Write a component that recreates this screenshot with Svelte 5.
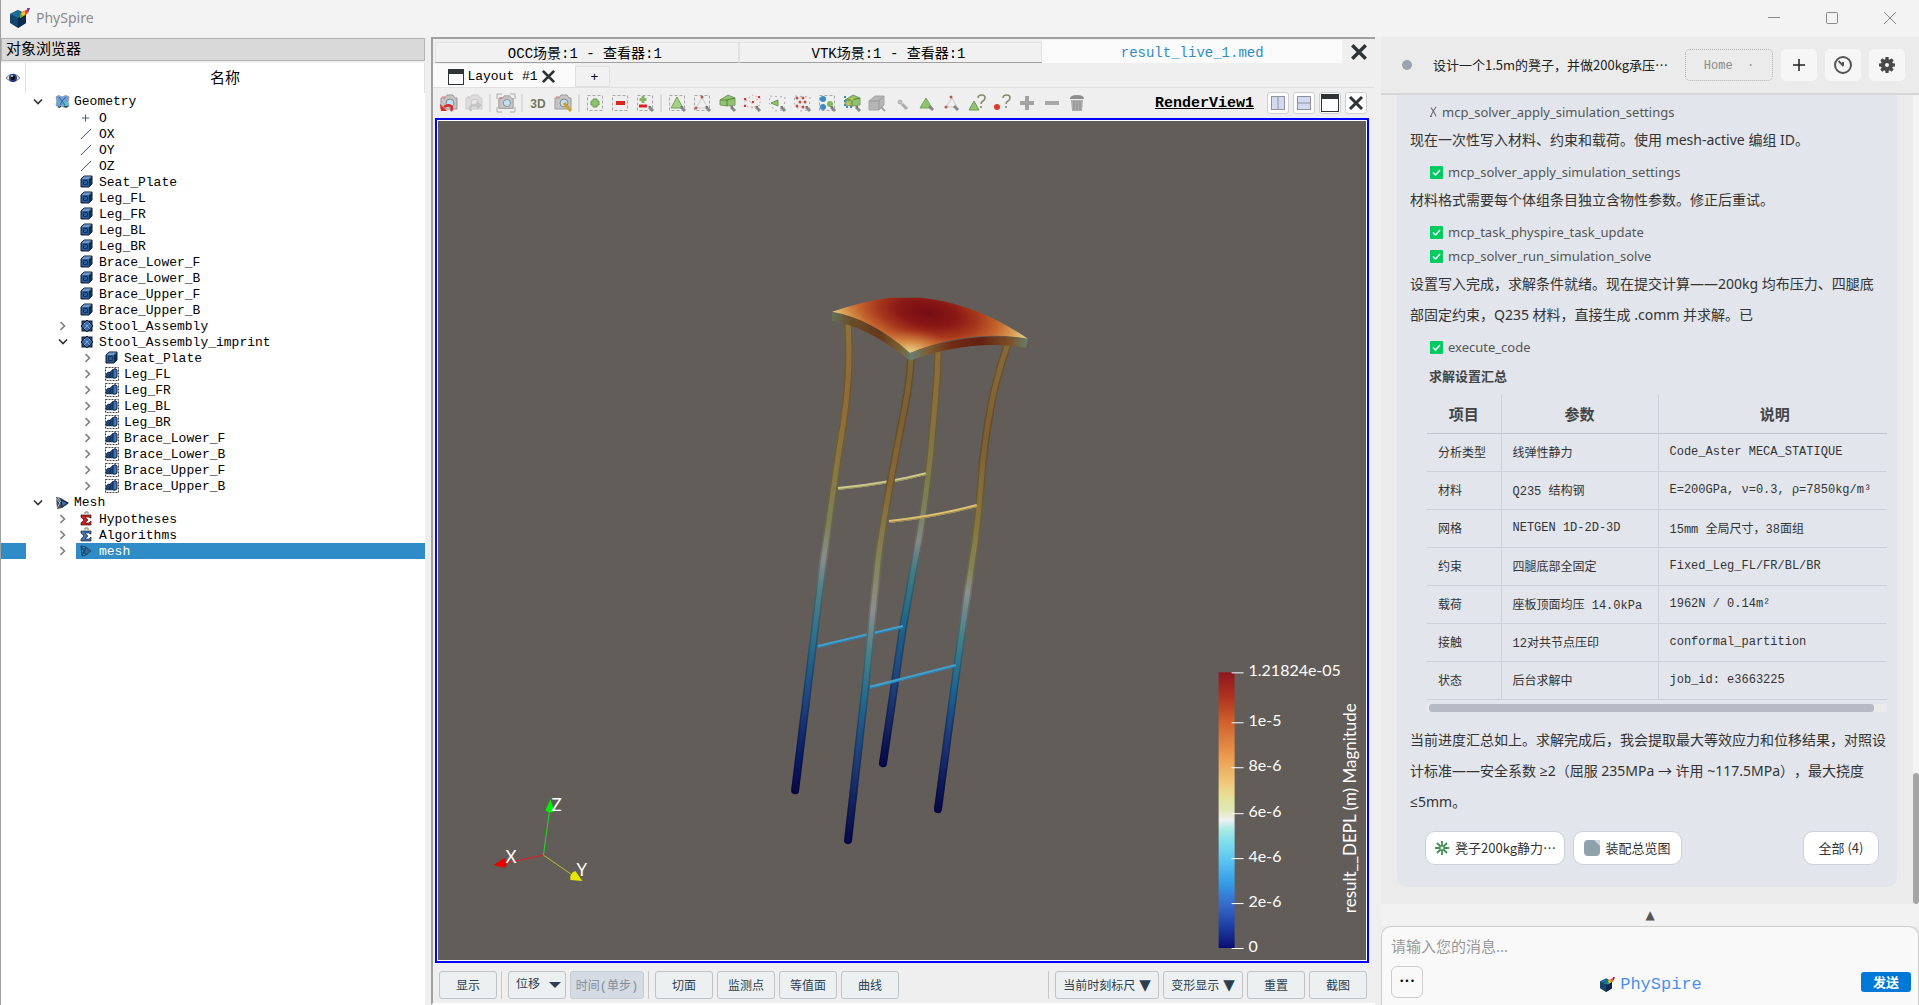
<script lang="ts">
    type TreeRow = { label: string; depth: number; icon: string; arrow?: "open" | "closed"; selected?: boolean };

    const parts = ["Leg_FL", "Leg_FR", "Leg_BL", "Leg_BR", "Brace_Lower_F", "Brace_Lower_B", "Brace_Upper_F", "Brace_Upper_B"];

    const tree: TreeRow[] = [
        { label: "Geometry", depth: 0, icon: "geometry", arrow: "open" },
        { label: "O", depth: 1, icon: "point" },
        { label: "OX", depth: 1, icon: "line" },
        { label: "OY", depth: 1, icon: "line" },
        { label: "OZ", depth: 1, icon: "line" },
        { label: "Seat_Plate", depth: 1, icon: "solid" },
        ...parts.map((label) => ({ label, depth: 1, icon: "solid" })),
        { label: "Stool_Assembly", depth: 1, icon: "compound", arrow: "closed" },
        { label: "Stool_Assembly_imprint", depth: 1, icon: "compound", arrow: "open" },
        { label: "Seat_Plate", depth: 2, icon: "solid", arrow: "closed" },
        ...parts.map((label) => ({ label, depth: 2, icon: "group", arrow: "closed" as const })),
        { label: "Mesh", depth: 0, icon: "mesh-root", arrow: "open" },
        { label: "Hypotheses", depth: 1, icon: "sigma-red", arrow: "closed" },
        { label: "Algorithms", depth: 1, icon: "sigma-blue", arrow: "closed" },
        { label: "mesh", depth: 1, icon: "mesh", arrow: "closed", selected: true },
    ];

    const tabs = ["OCC场景:1 - 查看器:1", "VTK场景:1 - 查看器:1", "result_live_1.med"];

    const tools = [
        "undo", "redo", "|", "snapshot", "|", "3d", "zoom", "|", "add", "sub", "toggle", "|",
        "cells", "points", "frustum-cells", "frustum-points", "poly-cells", "poly-points", "blocks", "inter-cells",
        "cube", "hover-point", "hover-cell", "hover-tri", "query-cell", "query-point", "plus", "minus", "trash",
    ];

    const ticks = [
        { y: 672, text: "1.21824e-05" },
        { y: 722, text: "1e-5" },
        { y: 767, text: "8e-6" },
        { y: 813, text: "6e-6" },
        { y: 858, text: "4e-6" },
        { y: 903, text: "2e-6" },
        { y: 948, text: "0" },
    ];

    const legs = [
        { id: "c", y1: 352, y2: 764, d: "M938 350C938 375 936 395 932 437C930 465 923 520 915 560L903 627L883 763",
          stops: [[0, "#8c6c3a"], [16, "#86713f"], [30, "#7e7b4c"], [38, "#7d805f"], [46, "#868686"], [53, "#437c82"], [65, "#23668a"], [82, "#1f3d78"], [100, "#080848"]] },
        { id: "a", y1: 325, y2: 791, d: "M848 322C850 360 849 390 840 443C835 475 829 520 823 562L795 790",
          stops: [[0, "#8a7340"], [14, "#8f6a38"], [29, "#8a7640"], [42, "#7c8057"], [50, "#8a8b8b"], [57, "#4f8085"], [69, "#2a6a8c"], [80, "#1f4680"], [93, "#0c1a60"], [100, "#080848"]] },
        { id: "b", y1: 359, y2: 841, d: "M911 356C910 385 905 405 895 457C888 495 879 545 877 570L865 690L848 840",
          stops: [[0, "#7a6438"], [13, "#7e6034"], [27, "#846a38"], [42, "#84845a"], [52, "#8d8d8d"], [60, "#4e8388"], [71, "#24688c"], [83, "#203d78"], [100, "#080848"]] },
        { id: "d", y1: 346, y2: 810, d: "M1008 343C995 380 989 410 983 460C980 500 975 545 972 562L958 660L938 809",
          stops: [[0, "#86683a"], [20, "#7e6034"], [37, "#86743f"], [48, "#848457"], [53, "#8d8d8d"], [63, "#44808a"], [74, "#1d6490"], [83, "#203d7a"], [100, "#080848"]] },
    ];

    const settings = [
        ["分析类型", "线弹性静力", "Code_Aster MECA_STATIQUE"],
        ["材料", "Q235 结构钢", "E=200GPa, ν=0.3, ρ=7850kg/m³"],
        ["网格", "NETGEN 1D-2D-3D", "15mm 全局尺寸，38面组"],
        ["约束", "四腿底部全固定", "Fixed_Leg_FL/FR/BL/BR"],
        ["载荷", "座板顶面均压 14.0kPa", "1962N / 0.14m²"],
        ["接触", "12对共节点压印", "conformal_partition"],
        ["状态", "后台求解中", "job_id: e3663225"],
    ];
</script>

{#snippet logo(size: number)}
    <svg class="logo" width={size} height={size} viewBox="0 0 20 20">
        <path d="M0 6L8 2L16 6V15L8 20L0 15Z" fill="#12466e" />
        <path d="M0 6L8 2L16 6L8 10Z" fill="#1e6d96" />
        <path d="M8 10L16 6V15L8 20Z" fill="#0d2a4e" />
        <path d="M10 10L12 4L20 0L17 6Z" fill="#e8452c" />
        <path d="M10 10L11 5L15 3L15 7Z" fill="#f6c21c" />
        <path d="M10 10L11 6L13 8Z" fill="#35b54a" />
        <path d="M17 0H20L18 5Z" fill="#7d2bb0" />
    </svg>
{/snippet}

{#snippet magnifier()}
    <path d="M14 14L18 18" stroke="#8a8a8a" stroke-width="3" />
    <path d="M13 13h3v3z" fill="#777" />
{/snippet}

{#snippet dashBox()}
    <rect x="2.5" y="2.5" width="15" height="15" fill="none" stroke="#a8a8a8" stroke-dasharray="3 2" />
{/snippet}

{#snippet camera(faded: boolean)}
    <g opacity={faded ? 0.4 : 1}>
        <path d="M2 5h4l2-3h6l2 3h2v11H2z" fill="#c4c4c4" stroke="#999" />
        <circle cx="11" cy="10" r="4" fill={faded ? "#ddd" : "#bfe0f4"} stroke="#888" />
        <path d="M3 4h3" stroke="#e66" stroke-width="1" />
    </g>
{/snippet}

{#snippet treeIcon(name: string)}
    <svg width="16" height="16" viewBox="0 0 16 16">
        {#if name === "geometry"}
            <path d="M1 3q2-3 6 0q4-3 7 0l-1 5l1 4q-3 3-6 1l-1-2l-1 2q-4 1-5-2l1-4z" fill="#6f9fd8" stroke="#8c9cae" />
            <path d="M2 8l3 4l1-4zM9 8l4 0l0 4l-3 1z" fill="#4fc6c8" />
            <path d="M4 3l3 4l4-4M7 7l-2 4M7 7l3 4" stroke="#3d5f94" fill="none" />
            <path d="M3 13q2 1 3-1M9 12q2 2 4 0" stroke="#1c2c3c" fill="none" />
        {:else if name === "point"}
            <path d="M2 8h7M5.500 4.500v7" stroke="#3d5f8c" />
        {:else if name === "line"}
            <path d="M1 13L11 3" stroke="#3d5f8c" />
        {:else if name === "solid"}
            <path d="M1 5L4 2H12V10L9 13H1Z" fill="#2b5b95" stroke="#101c2c" />
            <path d="M1.500 5L4 2.500H11.500L9 5Z" fill="#7299c6" />
            <path d="M9 5V13L12 10V2.500Z" fill="#142c4a" />
            <path d="M3.500 6.500h4v4h-4z" fill="none" stroke="#17365e" />
        {:else if name === "compound"}
            <rect x="2" y="3" width="10" height="10" fill="#1f4676" stroke="#101c2c" />
            <path d="M7 2L13 8L7 14L1 8Z" fill="#3a6aa5" stroke="#101c2c" />
            <path d="M4 5L10 11M10 5L4 11" stroke="#a9c0da" stroke-dasharray="2 1" />
        {:else if name === "group"}
            <rect x="0.500" y="1.500" width="13" height="13" fill="#fff" stroke="#444" stroke-dasharray="2 1" />
            <path d="M1 12V8L3 6H5V12ZM5 6L8 3V12H5Z" fill="#1c4474" stroke="#142c4a" stroke-width="0.500" />
            <path d="M8 4Q10 1 12 4V11Q10 13 8 12Z" fill="#3f73b5" stroke="#142c4a" />
        {:else if name === "mesh-root"}
            <path d="M1 2L6 3L14 8L7 13L2 14Z" fill="#444f5c" />
            <path d="M6 5L13 8L7 12Z" fill="#3c6fb4" stroke="#141d28" />
            <path d="M1 3L5 8L2 13M3 3L6 7" stroke="#bac0c8" fill="none" />
        {:else if name === "mesh"}
            <path d="M1 3L6 4L11 8L6 12L2 13ZM1 3L4 8L2 13M6 4L4 8L6 12M4 8H11M1 6L8 6M2 10H8" fill="none" stroke="#1f4468" />
        {:else}
            <path d="M1 4H11V7H10L9 6H5L8 9L5 12H9L11 10V14H1V12L4 9L1 6Z" fill={name === "sigma-red" ? "#d21c1c" : "#3f73b5"} stroke="#222" stroke-width="0.700" />
            <path d="M5 3V1h3v2" fill="none" stroke="#777" />
        {/if}
    </svg>
{/snippet}

{#snippet toolIcon(name: string)}
    <svg width="20" height="20" viewBox="0 0 20 20">
        {#if name === "undo"}
            {@render camera(false)}
            <path d="M5 14q4-3 7-1q2 2 0 5" fill="none" stroke="#d92b2b" stroke-width="2.500" />
            <path d="M1 11l1 7l6 0z" fill="#d92b2b" />
        {:else if name === "redo"}
            {@render camera(true)}
            <path d="M7 18q-3-6 4-6h3" fill="none" stroke="#c4c4c4" stroke-width="2.500" />
            <path d="M12 8l6 4l-5 5z" fill="#c4c4c4" />
        {:else if name === "snapshot"}
            <path d="M1 6V1H6M14 1H19V6M1 14V19H6M14 19H19V14" fill="none" stroke="#aaa" stroke-width="1" />
            <g transform="translate(1 1) scale(0.9)">{@render camera(false)}</g>
        {:else if name === "3d"}
            <text x="10" y="15" text-anchor="middle" class="icon-text">3D</text>
        {:else if name === "zoom"}
            {@render camera(false)}
            <path d="M11 10L18 18" stroke="#c9a227" stroke-width="3" />
        {:else if name === "add"}
            {@render dashBox()}
            <path d="M8 6h4v2h2v4h-2v2h-4v-2h-2v-4h2z" fill="#8fc46f" stroke="#6d9a55" />
        {:else if name === "sub"}
            {@render dashBox()}
            <rect x="6" y="8" width="9" height="4" fill="#dd2222" />
        {:else if name === "toggle"}
            {@render dashBox()}
            <path d="M8 3v7M4.500 6.500h7" stroke="#84b564" stroke-width="3" />
            <path d="M4 13h8" stroke="#dd2222" stroke-width="3" />
            {@render magnifier()}
        {:else if name === "cells"}
            {@render dashBox()}
            <path d="M10 4L16 15H4Z" fill="#a5cf82" stroke="#76a35a" />
            {@render magnifier()}
        {:else if name === "points"}
            {@render dashBox()}
            <path d="M10 5L16 15H4Z" fill="none" stroke="#ccc" />
            <circle cx="10" cy="4" r="1.500" fill="#b85a4a" /><circle cx="4" cy="15" r="1.500" fill="#b85a4a" />
            {@render magnifier()}
        {:else if name === "frustum-cells" || name === "inter-cells"}
            <path d="M3 7L11 2L18 5V12L10 13L3 12Z" fill="#8fc46f" stroke="#7a9a68" />
            <path d="M3 7L10 7L18 5M10 7V13" fill="none" stroke="#56823f" />
            {#if name === "inter-cells"}
                <path d="M3 3v11h8" fill="none" stroke="#3b8cc4" stroke-dasharray="2 2" stroke-width="2" />
                <circle cx="10" cy="6" r="1.500" fill="#e8b83a" /><circle cx="6" cy="11" r="1.500" fill="#e8b83a" />
            {/if}
            {@render magnifier()}
        {:else if name === "frustum-points"}
            <path d="M3 7L11 2L18 5V12L10 15L3 13ZM3 7L10 9L18 5M10 9V15" fill="none" stroke="#e2a49f" stroke-dasharray="2 2" />
            <path d="M2 6h2M10 9h2M2 13h2M16 4h2" stroke="#d33" stroke-width="2" />
            {@render magnifier()}
        {:else if name === "poly-cells"}
            <path d="M3 3L18 4L17 17L8 18L2 10Z" fill="none" stroke="#aaa" stroke-dasharray="2 3" />
            <path d="M4 10L11 7V13Z" fill="#8fc46f" stroke="#6d9a55" />
            {@render magnifier()}
        {:else if name === "poly-points"}
            <path d="M3 3L18 4L17 17L8 18L2 10Z" fill="none" stroke="#aaa" stroke-dasharray="2 3" />
            <g fill="#c4503f">
                <circle cx="5" cy="5" r="1.500" /><circle cx="11" cy="5" r="1.500" /><circle cx="8" cy="9" r="1.500" />
                <circle cx="13" cy="9" r="1.500" /><circle cx="5" cy="13" r="1.500" /><circle cx="11" cy="14" r="1.500" />
            </g>
            {@render magnifier()}
        {:else if name === "blocks"}
            {@render dashBox()}
            <circle cx="6" cy="6" r="3" fill="#3b8cc4" /><circle cx="6" cy="14" r="3" fill="#3b8cc4" />
            <circle cx="13" cy="11" r="3" fill="#7fb85f" />
            {@render magnifier()}
        {:else if name === "cube"}
            <path d="M2 8L8 3H17V12L12 17H2Z" fill="#b5b5b5" stroke="#a4a4a4" />
            <path d="M2 8H12L17 3M12 8V17" fill="none" stroke="#999" />
            <path d="M14 14L18 18" stroke="#a4a4a4" stroke-width="2" />
        {:else if name === "hover-point"}
            <circle cx="8" cy="9" r="2" fill="#c4c4c4" stroke="#aaa" /><path d="M10 11L15 16" stroke="#aaa" stroke-width="3" />
        {:else if name === "hover-cell"}
            <path d="M9 5L15 15H3Z" fill="#8fc46f" stroke="#76a35a" />
            <path d="M12 13l4 4" stroke="#888" stroke-width="3" />
        {:else if name === "hover-tri"}
            <path d="M10 5L15 14H4Z" fill="none" stroke="#c8c8c8" />
            <circle cx="9" cy="4" r="1.500" fill="#b85a4a" /><circle cx="4" cy="14" r="1.500" fill="#b85a4a" />
            <path d="M12 13l4 4" stroke="#888" stroke-width="3" />
        {:else if name === "query-cell" || name === "query-point"}
            {#if name === "query-cell"}
                <path d="M7 8L12 17H2Z" fill="#8fc46f" stroke="#6d9a55" />
            {:else}
                <circle cx="5" cy="14" r="3" fill="#dc3b2c" />
            {/if}
            <path d="M11 5q0-3 4-3q3 0 3 3q0 2-2 3t-2 3M14 13v2" fill="none" stroke="#86876c" stroke-width="1.500" />
        {:else if name === "plus"}
            <path d="M8 3h4v5h5v4h-5v5h-4v-5h-5v-4h5z" fill="#a3a3a3" />
        {:else if name === "minus"}
            <rect x="3" y="8" width="14" height="4" fill="#a9a9a9" />
        {:else}
            <path d="M3 6q0-4 7-4q7 0 7 4z" fill="#8d8d8d" />
            <path d="M4 7h12l-1 11H5z" fill="#adadad" /><path d="M7 8v9M10 8v9M13 8v9" stroke="#8d8d8d" />
        {/if}
    </svg>
{/snippet}

{#snippet cross(size: number)}
    <svg width={size} height={size} viewBox="0 0 16 16"><path d="M2 2L14 14M14 2L2 14" stroke="#2e3436" stroke-width="3" /></svg>
{/snippet}

{#snippet toolCall(name: string, ok: boolean)}
    <div class="tool-call">
        {#if ok}
            <svg width="13" height="13" viewBox="0 0 13 13"><rect width="13" height="13" rx="1" fill="#00cb62" /><path d="M3 6.500L5.500 9L10 4" fill="none" stroke="#fff" stroke-width="1.500" /></svg>
        {:else}
            <svg width="7" height="12" viewBox="0 0 8 12"><path d="M7 0Q3 5 1 11M1 1Q4 4 7 11M0 11h2" fill="none" stroke="#666" stroke-width="1.200" /></svg>
        {/if}
        <span>{name}</span>
    </div>
{/snippet}

<div class="window">
    <header class="titlebar">
        {@render logo(20)}
        <h1>PhySpire</h1>
        <div class="window-controls">
            <button aria-label="minimize"><svg width="12" height="12" viewBox="0 0 12 12"><path d="M0 5.500H12" /></svg></button>
            <button aria-label="maximize"><svg width="12" height="12" viewBox="0 0 12 12"><rect x="0.500" y="0.500" width="11" height="11" rx="1" /></svg></button>
            <button aria-label="close"><svg width="12" height="12" viewBox="0 0 12 12"><path d="M0 0L12 12M12 0L0 12" /></svg></button>
        </div>
    </header>

    <div class="workspace">
        <aside class="browser">
            <h2>对象浏览器</h2>
            <div class="browser-body">
                <div class="columns">
                    <div class="col-eye">
                        <svg width="14" height="10" viewBox="0 0 14 10"><path d="M0 5Q7-3 14 5Q7 12 0 5Z" fill="#e8e8e8" stroke="#777" /><circle cx="7" cy="5" r="4" fill="#1f3c78" /><circle cx="7" cy="5" r="2" fill="#000" /><circle cx="6" cy="3" r="1" fill="#cde" /></svg>
                    </div>
                    <div class="col-name">名称</div>
                </div>
                <ul class="tree">
                    {#each tree as row, i (i)}
                        <li class:top={row.depth === 0} class:selected={row.selected}>
                            <span class="eye-cell"></span>
                            <span class="arrow" style="margin-left: {row.depth * 25}px">
                                {#if row.arrow === "open"}
                                    <svg width="10" height="6" viewBox="0 0 10 6"><path d="M1 0.500L5 4.500L9 0.500" fill="none" stroke="#333" stroke-width="1.600" /></svg>
                                {:else if row.arrow === "closed"}
                                    <svg width="6" height="10" viewBox="0 0 6 10"><path d="M0.500 1L4.500 5L0.500 9" fill="none" stroke="#808080" stroke-width="1.600" /></svg>
                                {/if}
                            </span>
                            <span class="item">{@render treeIcon(row.icon)}<span class="label">{row.label}</span></span>
                        </li>
                    {/each}
                </ul>
            </div>
        </aside>

        <main class="viewer">
            <div class="tabs">
                {#each tabs as tab, i (tab)}
                    <button class:active={i === 2}>{tab}</button>
                {/each}
                <button class="close" aria-label="close tab">{@render cross(18)}</button>
            </div>
            <div class="layout-tabs">
                <button class="active">
                    <svg width="16" height="16" viewBox="0 0 16 16"><rect x="0.500" y="0.500" width="15" height="15" fill="#fff" stroke="#2e3436" /><rect width="16" height="5" fill="#2e3436" /></svg>
                    Layout #1
                    {@render cross(15)}
                </button>
                <button class="new-layout">+</button>
            </div>
            <div class="toolbar">
                {#each tools as tool, i (i)}
                    {#if tool === "|"}
                        <span class="sep"></span>
                    {:else}
                        <button aria-label={tool}>{@render toolIcon(tool)}</button>
                    {/if}
                {/each}
                <span class="view-name">RenderView1</span>
                <div class="view-buttons">
                    <button aria-label="split right"><svg width="14" height="14" viewBox="0 0 14 14"><rect x="0.500" y="0.500" width="13" height="13" fill="#d3daf0" stroke="#8f939c" /><path d="M7 0V14" stroke="#8f939c" /></svg></button>
                    <button aria-label="split down"><svg width="14" height="14" viewBox="0 0 14 14"><rect x="0.500" y="0.500" width="13" height="13" fill="#d3daf0" stroke="#8f939c" /><path d="M0 7H14" stroke="#8f939c" /></svg></button>
                    <button aria-label="maximize view"><svg width="18" height="18" viewBox="0 0 18 18"><rect x="0.500" y="0.500" width="17" height="17" fill="#fff" stroke="#2e3436" /><rect width="18" height="5" fill="#2e3436" /></svg></button>
                    <button aria-label="close view">{@render cross(16)}</button>
                </div>
            </div>

            <div class="viewport">
                <svg class="scene" viewBox="438 120 928 840">
                    <defs>
                        {#each legs as leg (leg.id)}
                            <linearGradient id="leg-{leg.id}" gradientUnits="userSpaceOnUse" x1="0" x2="0" y1={leg.y1} y2={leg.y2}>
                                {#each leg.stops as [offset, color] (offset)}
                                    <stop offset="{offset}%" stop-color={color} />
                                {/each}
                            </linearGradient>
                        {/each}
                        <radialGradient id="seat" gradientUnits="userSpaceOnUse" cx="0" cy="0" r="1" gradientTransform="translate(928 312) rotate(10) scale(98 44)">
                            <stop offset="0" stop-color="#760c14" />
                            <stop offset="0.300" stop-color="#8a1816" />
                            <stop offset="0.520" stop-color="#a8381c" />
                            <stop offset="0.720" stop-color="#c4652e" />
                            <stop offset="0.880" stop-color="#d99850" />
                            <stop offset="1" stop-color="#dcc47c" />
                        </radialGradient>
                        <radialGradient id="seat-corner" gradientUnits="userSpaceOnUse" cx="0" cy="0" r="1" gradientTransform="translate(910 352) scale(42 24)">
                            <stop offset="0" stop-color="#e4d488" />
                            <stop offset="0.400" stop-color="#e0a45c" stop-opacity="0.700" />
                            <stop offset="1" stop-color="#c8682e" stop-opacity="0" />
                        </radialGradient>
                        <linearGradient id="side-left">
                            <stop offset="0" stop-color="#66705a" />
                            <stop offset="0.250" stop-color="#6a4c28" />
                            <stop offset="0.600" stop-color="#65381c" />
                            <stop offset="0.850" stop-color="#7a5c30" />
                            <stop offset="1" stop-color="#6c7a5c" />
                        </linearGradient>
                        <linearGradient id="side-right">
                            <stop offset="0" stop-color="#667f76" />
                            <stop offset="0.160" stop-color="#7c5c30" />
                            <stop offset="0.350" stop-color="#702c14" />
                            <stop offset="0.600" stop-color="#642010" />
                            <stop offset="0.850" stop-color="#7c5028" />
                            <stop offset="1" stop-color="#66806c" />
                        </linearGradient>
                        <linearGradient id="scale" x1="0" x2="0" y1="0" y2="1">
                            <stop offset="0" stop-color="#8f1520" />
                            <stop offset="0.090" stop-color="#ae3420" />
                            <stop offset="0.180" stop-color="#cf602c" />
                            <stop offset="0.300" stop-color="#ea984e" />
                            <stop offset="0.400" stop-color="#f0c878" />
                            <stop offset="0.450" stop-color="#e6e096" />
                            <stop offset="0.500" stop-color="#dfe8b8" />
                            <stop offset="0.535" stop-color="#f0f0f0" />
                            <stop offset="0.570" stop-color="#a8eae4" />
                            <stop offset="0.620" stop-color="#7cdcec" />
                            <stop offset="0.690" stop-color="#58c0f2" />
                            <stop offset="0.760" stop-color="#369ee8" />
                            <stop offset="0.840" stop-color="#366ccc" />
                            <stop offset="0.920" stop-color="#1e40a4" />
                            <stop offset="1" stop-color="#0c0c70" />
                        </linearGradient>
                    </defs>

                    {#each legs as leg (leg.id)}
                        <g fill="none" stroke="url(#leg-{leg.id})" stroke-linecap="round">
                            <path d={leg.d} stroke-width="8" />
                            <path d={leg.d} stroke="#000" stroke-opacity="0.200" stroke-width="8" />
                            <path d={leg.d} stroke-width="5" />
                        </g>
                        {#if leg.id === "a"}
                            <g fill="none" stroke-width="3">
                                <path d="M838 488Q887 483 926 473" stroke="#cdca8c" />
                                <path d="M838 489Q887 484 926 474" stroke="#8f8e5c" stroke-width="1" />
                                <path d="M818 646L903 626" stroke="#45a0cc" />
                                <path d="M818 647L903 627" stroke="#2a7aa8" stroke-width="1" />
                            </g>
                        {/if}
                    {/each}
                    <g fill="none" stroke-width="3">
                        <path d="M889 521Q935 516 977 505" stroke="#dcc074" />
                        <path d="M889 522Q935 517 977 506" stroke="#9a8446" stroke-width="1" />
                        <path d="M870 687L956 665" stroke="#45a0cc" />
                        <path d="M870 688L956 666" stroke="#2a7aa8" stroke-width="1" />
                    </g>

                    <path d="M832 311Q872 318 910 352V360Q870 327 832 320Z" fill="url(#side-left)" />
                    <path d="M910 352Q970 330 1028 338L1026 347Q970 338 910 360Z" fill="url(#side-right)" />
                    <path d="M832 311Q865 300 890 297H920Q975 302 1028 338Q970 328 910 352Q872 318 832 311Z" fill="url(#seat)" />
                    <path d="M832 311Q865 300 890 297H920Q975 302 1028 338Q970 328 910 352Q872 318 832 311Z" fill="url(#seat-corner)" />

                    <g class="axes">
                        <path d="M543 855L549 811" stroke="#1fdc1f" />
                        <path d="M543 855L505 863" stroke="#e01f1f" />
                        <path d="M543 855L572 875" stroke="#bcbc2c" />
                        <path d="M550 799L554 811Q549 814 545 810Z" fill="#00f000" />
                        <path d="M493 865L504 858Q508 863 505 868Z" fill="#e60000" />
                        <path d="M582 881L570 880Q569 873 575 871Z" fill="#e6e600" />
                        <text x="551" y="811">Z</text>
                        <text x="505" y="863">X</text>
                        <text x="576" y="876">Y</text>
                    </g>

                    <rect x="1219" y="672" width="16" height="276" fill="url(#scale)" />
                    <g class="scale-labels">
                        {#each ticks as tick (tick.y)}
                            <rect x="1232" y={tick.y} width="12" height="1" />
                            <text x="1249" y={tick.y + 4}>{tick.text}</text>
                        {/each}
                        <text class="scale-title" transform="translate(1357 808) rotate(-90)" text-anchor="middle">result__DEPL (m) Magnitude</text>
                    </g>
                </svg>
            </div>

            <div class="post-bar">
                <button>显示</button>
                <span class="sep"></span>
                <div class="combo">
                    <select aria-label="field"><option>位移</option></select>
                    <svg width="12" height="6" viewBox="0 0 12 6"><path d="M0 0H12L6 6Z" fill="#2c3e50" /></svg>
                </div>
                <button class="time" disabled>时间(单步)</button>
                <span class="sep"></span>
                <button>切面</button>
                <button>监测点</button>
                <button>等值面</button>
                <button>曲线</button>
                <span class="spacer"></span>
                <span class="sep"></span>
                <button class="wide">当前时刻标尺<span class="caret">▼</span></button>
                <button class="medium">变形显示<span class="caret">▼</span></button>
                <button>重置</button>
                <button>截图</button>
            </div>
        </main>

        <section class="chat">
            <div class="chat-header">
                <span class="dot"></span>
                <span class="chat-title">设计一个1.5m的凳子，并做200kg承压⋯</span>
                <button class="home">Home&nbsp; ·</button>
                <button class="square" aria-label="new chat"><svg width="12" height="12" viewBox="0 0 12 12"><path d="M6 0V12M0 6H12" stroke="#222" stroke-width="1.500" /></svg></button>
                <button class="square" aria-label="history"><svg width="20" height="20" viewBox="0 0 20 20"><circle cx="10" cy="10" r="8" fill="none" stroke="#555" stroke-width="2" /><path d="M5.500 6L10.500 11M10 7V10.500" fill="none" stroke="#555" stroke-width="2" /></svg></button>
                <button class="square" aria-label="settings">
                    <svg width="18" height="18" viewBox="-9 -9 18 18">
                        {#each [0, 45, 90, 135] as angle (angle)}
                            <path d="M-1.500 -8H1.500L2.500 0L1.500 8H-1.500L-2.500 0Z" fill="#4a4a4a" transform="rotate({angle})" />
                        {/each}
                        <circle r="6" fill="#4a4a4a" /><circle r="2" fill="#f6f6f6" />
                    </svg>
                </button>
            </div>

            <div class="messages">
                <div class="bubble">
                    {@render toolCall("mcp_solver_apply_simulation_settings", false)}
                    <p>现在一次性写入材料、约束和载荷。使用 mesh-active 编组 ID。</p>
                    {@render toolCall("mcp_solver_apply_simulation_settings", true)}
                    <p>材料格式需要每个体组条目独立含物性参数。修正后重试。</p>
                    {@render toolCall("mcp_task_physpire_task_update", true)}
                    {@render toolCall("mcp_solver_run_simulation_solve", true)}
                    <p>设置写入完成，求解条件就绪。现在提交计算——200kg 均布压力、四腿底<br />部固定约束，Q235 材料，直接生成 .comm 并求解。已</p>
                    {@render toolCall("execute_code", true)}
                    <h3>求解设置汇总</h3>
                    <div class="table-scroll">
                        <table>
                            <thead>
                                <tr><th>项目</th><th>参数</th><th>说明</th></tr>
                            </thead>
                            <tbody>
                                {#each settings as cells (cells[0])}
                                    <tr>
                                        {#each cells as cell (cell)}
                                            <td>{cell}</td>
                                        {/each}
                                    </tr>
                                {/each}
                            </tbody>
                        </table>
                        <div class="track"><div class="thumb"></div></div>
                    </div>
                    <p class="summary">当前进度汇总如上。求解完成后，我会提取最大等效应力和位移结果，对照设<br />计标准——安全系数 ≥2（屈服 235MPa → 许用 ~117.5MPa），最大挠度<br />≤5mm。</p>
                    <div class="chips">
                        <button class="chip-result">
                            <svg width="16" height="16" viewBox="-8 -8 16 16"><path d="M0 -7V7M-7 0H7M-5 -5L5 5M5 -5L-5 5" stroke="#3f9150" stroke-width="1.800" /><circle r="2" fill="#fff" stroke="#3f9150" /></svg>
                            凳子200kg静力⋯
                        </button>
                        <button class="chip-view">
                            <svg width="16" height="16" viewBox="0 0 16 16"><rect width="16" height="16" rx="4" fill="#8fa2ac" /><path d="M10 0H16V6Z" fill="#cfd8dd" /></svg>
                            装配总览图
                        </button>
                        <button class="chip-all">全部 (4)</button>
                    </div>
                </div>
                <div class="scrollbar"><div class="handle"></div></div>
            </div>

            <button class="expand" aria-label="expand">▲</button>
            <div class="composer">
                <textarea aria-label="message" placeholder="请输入您的消息..."></textarea>
                <div class="composer-row">
                    <button class="more">•••</button>
                    <div class="brand">{@render logo(15)}<span>PhySpire</span></div>
                    <button class="send">发送</button>
                </div>
            </div>
        </section>
    </div>
</div>

<style>
    :global(body) {
        margin: 0;
    }

    .window {
        --mono: "Liberation Mono", "Noto Sans CJK SC", monospace;
        --sans: "Noto Sans", "Open Sans", "Noto Sans CJK SC", sans-serif;
        height: 100vh;
        display: flex;
        flex-direction: column;
        overflow: hidden;
        background: #efefef;
        border-left: 1px solid #a0a0a0;
        box-sizing: border-box;
        font-family: var(--mono);
        font-size: 14px;
        color: #000;
        text-spacing-trim: space-all;
    }

    .window * {
        box-sizing: border-box;
    }

    svg {
        flex: none;
        display: block;
    }

    button {
        padding: 0;
        border: 0;
        background: none;
        font: inherit;
        color: inherit;
        display: flex;
        align-items: center;
        justify-content: center;
        flex: none;
        white-space: nowrap;
    }

    h1, h2, h3, p, ul {
        margin: 0;
        padding: 0;
    }

    .titlebar {
        height: 37px;
        flex: none;
        display: flex;
        align-items: center;
        padding: 0 0 2px 9px;
        background: #f3f3f3;
    }

    .titlebar h1 {
        margin-left: 6px;
        font: 14px/20px var(--sans);
        color: #8c8c8c;
    }

    .window-controls {
        margin-left: auto;
        display: flex;
    }

    .window-controls button {
        width: 58px;
        height: 34px;
    }

    .window-controls svg {
        fill: none;
        stroke: #8a8a8a;
    }

    .workspace {
        flex: 1;
        min-height: 0;
        display: flex;
        gap: 6px;
    }

    /* object browser */
    .browser {
        width: 424px;
        flex: none;
        display: flex;
        flex-direction: column;
        padding-top: 1px;
    }

    .browser h2 {
        height: 23px;
        padding-left: 4px;
        border: 1px solid #b4b4b4;
        background: #d9d9d9;
        font-size: 15px;
        line-height: 24px;
        font-weight: normal;
    }

    .browser-body {
        flex: 1;
        margin-top: 2px;
        background: #fff;
    }

    .columns {
        height: 30px;
        display: flex;
        font-size: 15px;
        border-right: 1px solid #e0e0e0;
    }

    .col-eye {
        width: 25px;
        display: flex;
        align-items: center;
        justify-content: center;
        border-right: 1px solid #e0e0e0;
    }

    .col-name {
        flex: 1;
        text-align: center;
        line-height: 34px;
    }

    .tree {
        list-style: none;
        font-size: 13px;
    }

    .tree li {
        height: 16px;
        display: flex;
        line-height: 16px;
    }

    .tree li.top {
        height: 17px;
    }

    .eye-cell, .arrow {
        width: 25px;
        flex: none;
    }

    .arrow {
        display: flex;
        align-items: center;
        justify-content: center;
        padding-right: 1px;
    }

    .item {
        flex: 1;
        display: flex;
        align-items: center;
        gap: 3px;
        padding-left: 4px;
    }

    .label {
        padding-top: 2px;
    }

    .top .label {
        padding-top: 0;
    }

    .selected .eye-cell, .selected .item {
        background: #308cc6;
        color: #fff;
    }

    /* viewer */
    .viewer {
        flex: 1;
        min-width: 0;
        display: flex;
        flex-direction: column;
        border: 2px solid #a0a0a0;
        border-right: 0;
        border-bottom-color: #fff;
    }

    .tabs {
        height: 24px;
        flex: none;
        display: flex;
        align-items: flex-end;
        padding-left: 2px;
    }

    .tabs button {
        flex: 1;
        height: 21px;
        padding: 0 4px 2px 0;
        border: 1px solid #e2e2e2;
        border-bottom-color: #a0a0a0;
        background: #f1f1f1;
    }

    .tabs button.active {
        height: 23px;
        padding: 2px 0 0;
        border-color: #fafafa;
        background: #fafafa;
        color: #308cc6;
    }

    .tabs button.close {
        flex: none;
        width: 33px;
        padding-left: 5px;
        border: 0;
        background: none;
    }

    .layout-tabs {
        height: 25px;
        flex: none;
        display: flex;
        align-items: flex-end;
        border-bottom: 1px solid #e0e0e0;
    }

    .layout-tabs button {
        height: 23px;
        width: 142px;
        gap: 3px;
        padding: 2px 4px 0 0;
        background: #fafafa;
        font-size: 13px;
    }

    .layout-tabs .new-layout {
        width: 35px;
        height: 21px;
        padding: 2px 0 0 4px;
        border: 1px solid #e0e0e0;
        background: #f1f1f1;
    }

    .toolbar {
        height: 30px;
        flex: none;
        display: flex;
        align-items: center;
        gap: 5px;
        padding: 0 8px 0 6px;
    }

    .sep {
        width: 2px;
        height: 18px;
        flex: none;
        background: #dadada;
    }

    .icon-text {
        font: bold 12px "Liberation Sans", sans-serif;
        fill: #76775c;
    }

    .view-name {
        margin-left: auto;
        margin-right: 8px;
        font-size: 15px;
        font-weight: bold;
        text-decoration: underline;
    }

    .view-buttons {
        display: flex;
        gap: 4px;
    }

    .view-buttons button {
        width: 22px;
        height: 22px;
        border: 1px solid #cfcfcf;
        border-radius: 3px;
        background: #fcfcfc;
    }

    .viewport {
        flex: 1;
        min-height: 0;
        margin: 0 6px 0 2px;
        border: 2px solid #00f;
        padding: 1px;
        background: #fff;
    }

    .scene {
        width: 100%;
        height: 100%;
        background: #635d5a;
    }

    .axes text, .scale-labels text {
        font: 16px Lato, sans-serif;
        fill: #fff;
    }

    .axes text, .scale-labels .scale-title {
        font-size: 17px;
    }

    .scale-labels rect {
        fill: #fff;
    }

    .post-bar {
        height: 40px;
        flex: none;
        display: flex;
        align-items: center;
        gap: 4px;
        padding: 4px 8px 0 6px;
        font-size: 12px;
        color: #2c3e50;
    }

    .post-bar button, .combo {
        width: 58px;
        height: 28px;
        border: 1px solid #bdc3c7;
        border-radius: 3px;
        background: #ecf0f1;
    }

    .post-bar .time {
        width: 74px;
        background: #d5dbe3;
        border-color: #c3cdd8;
        color: #7f8c9a;
    }

    .post-bar .wide {
        width: 104px;
    }

    .post-bar .medium {
        width: 80px;
    }

    .post-bar .sep {
        width: 1px;
        height: 28px;
        margin-right: 2px;
        background: #c4c8ca;
    }

    .caret {
        margin-left: 4px;
        font: 15px/20px "DejaVu Sans", sans-serif;
    }

    .spacer {
        flex: 1;
    }

    .combo {
        display: flex;
        align-items: center;
        padding: 0 4px 0 7px;
    }

    .combo select {
        flex: 1;
        min-width: 0;
        padding: 0;
        border: 0;
        background: none;
        appearance: none;
        font: inherit;
        color: inherit;
    }

    /* chat */
    .chat {
        width: 538px;
        flex: none;
        display: flex;
        flex-direction: column;
        background: #ebebeb;
    }

    .chat-header {
        height: 58px;
        flex: none;
        display: flex;
        align-items: center;
        gap: 8px;
        padding: 0 14px 0 21px;
        border-bottom: 2px solid #d6d6d6;
        font-size: 12px;
    }

    .dot {
        width: 10px;
        height: 10px;
        border-radius: 5px;
        background: #9ca3af;
    }

    .chat-title {
        flex: 1;
        margin-left: 13px;
        font: 13px/20px "Noto Sans CJK SC", sans-serif;
        color: #222;
        white-space: nowrap;
    }

    .home {
        width: 88px;
        height: 32px;
        padding-top: 2px;
        border: 1px dotted #b0b0b0;
        border-radius: 5px;
        color: #888;
    }

    .square {
        width: 36px;
        height: 32px;
        border-radius: 5px;
        background: #f6f6f6;
    }

    .messages {
        flex: 1;
        min-height: 0;
        display: flex;
        overflow: hidden;
    }

    .bubble {
        flex: 1;
        align-self: flex-start;
        min-width: 0;
        margin: 0 16px;
        padding: 5px 10px 22px 13px;
        border-radius: 0 0 10px 10px;
        background: #e2e5ec;
    }

    .bubble p {
        margin-bottom: 5px;
        font: 14px/31px var(--sans);
        color: #333;
        white-space: nowrap;
    }

    .tool-call {
        height: 24px;
        display: flex;
        align-items: center;
        gap: 5px;
        padding-left: 20px;
        font: 13px/24px var(--sans);
        color: #555;
    }

    .bubble h3 {
        margin: 6px 0 8px;
        padding-left: 19px;
        font: bold 13px/22px var(--sans);
        color: #444;
    }

    .table-scroll {
        margin-left: 17px;
        overflow: hidden;
    }

    table {
        width: 464px;
        border-collapse: collapse;
        table-layout: fixed;
        font-size: 12px;
        color: #333;
    }

    th, td {
        height: 38px;
        padding: 0 11px;
        border-bottom: 1px solid #ccd0d9;
        border-right: 1px solid #ccd0d9;
        text-align: left;
        white-space: nowrap;
    }

    th {
        border-bottom-color: #c0c4ce;
        font-size: 15px;
        text-align: center;
        color: #444;
    }

    th:first-child {
        width: 74px;
    }

    th:nth-child(2) {
        width: 157px;
    }

    th:last-child, td:last-child {
        border-right: 0;
    }

    .track {
        height: 8px;
        margin-top: 4px;
        padding: 0 13px 0 2px;
        background: #ebebeb;
    }

    .thumb {
        height: 8px;
        border-radius: 3px;
        background: #b6bac4;
    }

    .bubble .summary {
        margin-top: 12px;
    }

    .chips {
        display: flex;
        gap: 8px;
        margin-top: 14px;
        padding: 0 8px 0 15px;
        font: 13px/20px "Noto Sans CJK SC", sans-serif;
    }

    .chips button {
        height: 34px;
        gap: 5px;
        border: 1px solid #cbd0da;
        border-radius: 10px;
        background: #fff;
        color: #333;
    }

    .chips .chip-result {
        width: 140px;
    }

    .chips .chip-view {
        width: 109px;
    }

    .chips .chip-all {
        width: 76px;
        margin-left: auto;
    }

    .scrollbar {
        width: 6px;
        flex: none;
        display: flex;
        flex-direction: column;
        justify-content: flex-end;
        background: #f4f4f4;
    }

    .handle {
        height: 131px;
        border-radius: 3px;
        background: #a5a5a5;
    }

    .expand {
        height: 22px;
        background: #f2f2f2;
        font: 12px "DejaVu Sans", sans-serif;
        color: #555;
    }

    .composer {
        flex: none;
        padding: 8px 7px 7px 9px;
        border: 1px solid #ccc;
        border-bottom: 0;
        border-radius: 10px 10px 0 0;
        background: #f9f9f9;
    }

    textarea {
        display: block;
        width: 100%;
        height: 31px;
        padding: 0;
        border: 0;
        resize: none;
        background: none;
        font: 15px/22px var(--sans);
    }

    textarea::placeholder {
        color: #999;
    }

    .composer-row {
        display: flex;
        align-items: center;
        justify-content: space-between;
    }

    .more {
        width: 32px;
        height: 32px;
        border: 1px solid #ccc;
        border-radius: 6px;
        font-size: 9px;
    }

    .brand {
        display: flex;
        align-items: center;
        gap: 5px;
        padding: 4px 0 0 18px;
        font-size: 17px;
        color: #4a90f0;
    }

    .send {
        width: 50px;
        height: 20px;
        border-radius: 3px;
        background: #0078d7;
        color: #fff;
        font: bold 13px/20px var(--sans);
    }
</style>
